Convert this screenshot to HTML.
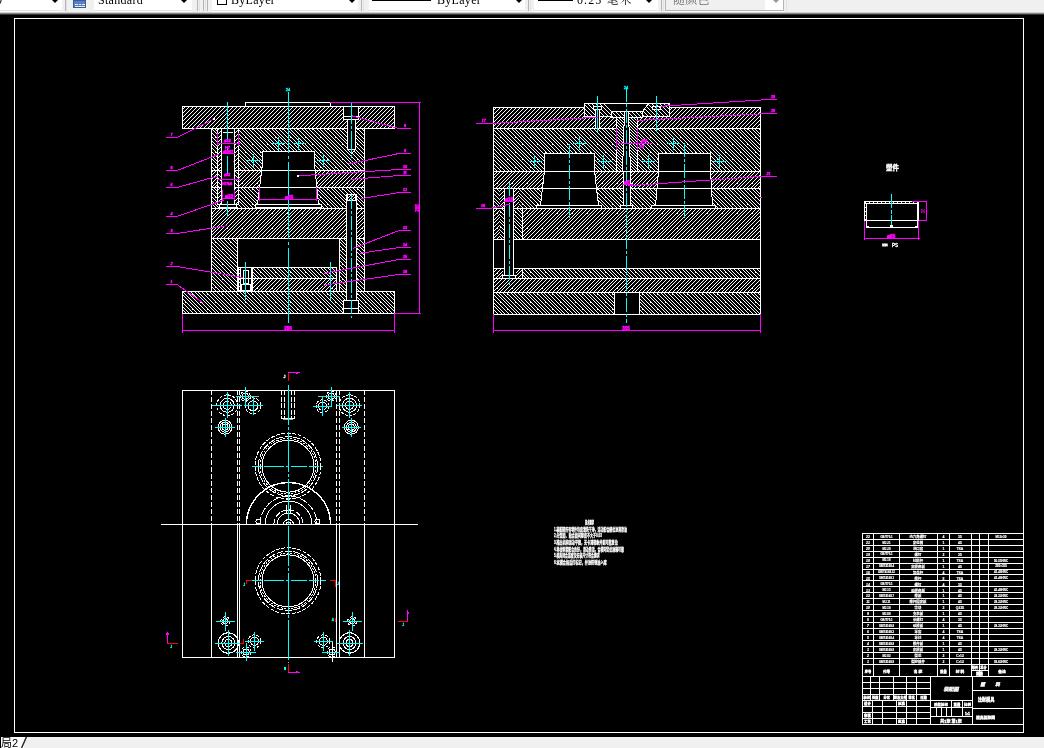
<!DOCTYPE html>
<html lang="zh-CN">
<head>
<meta charset="utf-8">
<title>装配图</title>
<style>
html,body{margin:0;padding:0;background:#000;}
body{width:1044px;height:748px;overflow:hidden;position:relative;font-family:"Liberation Serif","Noto Serif CJK SC",serif;}
#cad{position:absolute;left:0;top:0;width:1044px;height:748px;display:block;will-change:transform;}
#cad text{font-family:"Liberation Sans","Noto Sans CJK SC",sans-serif;}
#tb{position:absolute;left:0;top:0;width:1044px;height:15px;background:linear-gradient(#f0f0f0 0,#f0f0f0 12px,#cfcfcf 12px,#cfcfcf 13px,#858585 13px,#858585 14px,#333 14px,#333 15px);overflow:hidden;will-change:transform;}
.cb{position:absolute;top:0;height:11px;background:#fff;border-bottom:1px solid #dfe3e8;box-sizing:border-box;overflow:hidden;box-shadow:0 1px 0 #fdfdfd;}
.cb.dis{background:#f0f0f0;border:1px solid #b5b5b5;border-top:0;}
.cb span{position:absolute;top:-6px;font-size:12px;line-height:12px;white-space:nowrap;color:#000;letter-spacing:0.3px;}
.cb.dis span{color:#6d6d6d;}
.ar{position:absolute;top:-1px;width:0;height:0;border-left:4px solid transparent;border-right:4px solid transparent;border-top:4px solid #000;}
.ar.g{border-top-color:#9a9a9a;}
.gr{position:absolute;top:0;width:1px;height:11px;background:#b4b4b4;}
.gr.l{background:#e2e2e2;}
.sw{position:absolute;top:0;height:1px;background:#000;}
.chk{position:absolute;top:-5px;width:8px;height:8px;border:1px solid #000;}
#ico{position:absolute;left:73px;top:0;width:13px;height:8px;background:#5b7fc0;border:1px solid #3c5a99;box-sizing:border-box;}
#ico i{position:absolute;background:#dfe8f7;height:1px;}
#sb{position:absolute;left:0;top:737px;width:1044px;height:11px;background:#f0f0f0;overflow:hidden;will-change:transform;}
#sb .tab{position:absolute;left:0;top:0;width:24px;height:11px;background:#fff;}
#sb span{position:absolute;left:0;top:0;font-family:"Liberation Sans","Noto Sans CJK SC",sans-serif;font-size:11px;line-height:12px;color:#000;white-space:nowrap;}
</style>
</head>
<body>
<svg id="cad" width="1044" height="748" viewBox="0 0 1044 748" shape-rendering="crispEdges" fill="none" stroke-width="1">
<defs>
<pattern id="h1" patternUnits="userSpaceOnUse" width="4" height="4"><rect width="4" height="4" fill="#000"/><path d="M3 0.5h1M2 1.5h1M1 2.5h1M0 3.5h1" stroke="#fff" stroke-width="1"/></pattern>
<pattern id="h2" patternUnits="userSpaceOnUse" width="4" height="4"><rect width="4" height="4" fill="#000"/><path d="M0 0.5h1M1 1.5h1M2 2.5h1M3 3.5h1" stroke="#fff" stroke-width="1"/></pattern>
<pattern id="h3" patternUnits="userSpaceOnUse" width="3" height="3"><rect width="3" height="3" fill="#000"/><path d="M2 0.5h1M1 1.5h1M0 2.5h1" stroke="#fff" stroke-width="1"/></pattern>
<pattern id="h4" patternUnits="userSpaceOnUse" width="3" height="3"><rect width="3" height="3" fill="#000"/><path d="M0 0.5h1M1 1.5h1M2 2.5h1" stroke="#fff" stroke-width="1"/></pattern>
<pattern id="h5" patternUnits="userSpaceOnUse" width="15" height="15"><rect width="15" height="15" fill="#000"/><path d="M0 0.5h1M4 0.5h1M8 0.5h1M11 0.5h1M14 1.5h1M3 1.5h1M7 1.5h1M10 1.5h1M13 2.5h1M2 2.5h1M6 2.5h1M9 2.5h1M12 3.5h1M1 3.5h1M5 3.5h1M8 3.5h1M11 4.5h1M0 4.5h1M4 4.5h1M7 4.5h1M10 5.5h1M14 5.5h1M3 5.5h1M6 5.5h1M9 6.5h1M13 6.5h1M2 6.5h1M5 6.5h1M8 7.5h1M12 7.5h1M1 7.5h1M4 7.5h1M7 8.5h1M11 8.5h1M0 8.5h1M3 8.5h1M6 9.5h1M10 9.5h1M14 9.5h1M2 9.5h1M5 10.5h1M9 10.5h1M13 10.5h1M1 10.5h1M4 11.5h1M8 11.5h1M12 11.5h1M0 11.5h1M3 12.5h1M7 12.5h1M11 12.5h1M14 12.5h1M2 13.5h1M6 13.5h1M10 13.5h1M13 13.5h1M1 14.5h1M5 14.5h1M9 14.5h1M12 14.5h1M2 3.5h1M9 10.5h1" stroke="#fff" stroke-width="1"/></pattern>
<pattern id="h6" patternUnits="userSpaceOnUse" width="15" height="15"><rect width="15" height="15" fill="#000"/><path d="M0 0.5h1M4 0.5h1M8 0.5h1M11 0.5h1M1 1.5h1M5 1.5h1M9 1.5h1M12 1.5h1M2 2.5h1M6 2.5h1M10 2.5h1M13 2.5h1M3 3.5h1M7 3.5h1M11 3.5h1M14 3.5h1M4 4.5h1M8 4.5h1M12 4.5h1M0 4.5h1M5 5.5h1M9 5.5h1M13 5.5h1M1 5.5h1M6 6.5h1M10 6.5h1M14 6.5h1M2 6.5h1M7 7.5h1M11 7.5h1M0 7.5h1M3 7.5h1M8 8.5h1M12 8.5h1M1 8.5h1M4 8.5h1M9 9.5h1M13 9.5h1M2 9.5h1M5 9.5h1M10 10.5h1M14 10.5h1M3 10.5h1M6 10.5h1M11 11.5h1M0 11.5h1M4 11.5h1M7 11.5h1M12 12.5h1M1 12.5h1M5 12.5h1M8 12.5h1M13 13.5h1M2 13.5h1M6 13.5h1M9 13.5h1M14 14.5h1M3 14.5h1M7 14.5h1M10 14.5h1M5 2.5h1M12 9.5h1" stroke="#fff" stroke-width="1"/></pattern>
<clipPath id="planclip"><rect x="182" y="390" width="213" height="267"/></clipPath>
</defs>
<rect x="0" y="0" width="1044" height="748" fill="#000" stroke="none"/>
<rect x="14.5" y="18.5" width="1009" height="714" fill="none" stroke="#fff"/>
<rect x="245.5" y="102.5" width="85" height="4" fill="#000" stroke="#fff"/>
<rect x="182.5" y="106.5" width="212" height="22" fill="url(#h1)" stroke="#fff"/>
<rect x="211.5" y="128.5" width="153" height="42" fill="url(#h6)" stroke="#fff"/>
<rect x="211.5" y="170.5" width="153" height="17" fill="url(#h5)" stroke="#fff"/>
<rect x="211.5" y="187.5" width="153" height="21" fill="url(#h6)" stroke="#fff"/>
<rect x="211.5" y="208.5" width="153" height="30" fill="url(#h5)" stroke="#fff"/>
<rect x="211.5" y="238.5" width="26" height="53" fill="url(#h6)" stroke="#fff"/>
<rect x="339.5" y="238.5" width="25" height="53" fill="url(#h6)" stroke="#fff"/>
<rect x="238.5" y="267.5" width="98" height="11" fill="url(#h6)" stroke="#fff"/>
<rect x="238.5" y="278.5" width="98" height="13" fill="url(#h5)" stroke="#fff"/>
<rect x="182.5" y="291.5" width="212" height="22" fill="url(#h6)" stroke="#fff"/>
<polygon points="262.5,151.5 314.5,151.5 314.5,164 318.5,204.5 257.5,204.5 262.5,164" fill="#000" stroke="#fff"/>
<path d="M259 170.5H318" stroke="#fff"/>
<path d="M258 187.5H319" stroke="#fff"/>
<rect x="255.5" y="204.5" width="66" height="3" fill="#000" stroke="#fff"/>
<rect x="217.5" y="128.5" width="21" height="42" fill="url(#h1)" stroke="#fff"/>
<rect x="217.5" y="170.5" width="21" height="17" fill="url(#h2)" stroke="#fff"/>
<rect x="217.5" y="187.5" width="21" height="17" fill="url(#h1)" stroke="#fff"/>
<rect x="221.5" y="128.5" width="13" height="76" fill="#000" stroke="#fff"/>
<path d="M223 132.5H233" stroke="#fff"/>
<rect x="219.5" y="204.5" width="17" height="3" fill="#000" stroke="#fff"/>
<rect x="343.5" y="106.5" width="15" height="13" fill="#000" stroke="#fff"/>
<path d="M343 116.5H358" stroke="#fff"/>
<rect x="347.5" y="119.5" width="8" height="30" fill="#000" stroke="#fff"/>
<polygon points="347.5,149.5 355.5,149.5 351.5,153.5" fill="#000" stroke="#fff"/>
<rect x="346.5" y="194.5" width="10" height="106" fill="#000" stroke="#fff"/>
<rect x="347.5" y="194.5" width="8" height="6" fill="url(#h3)" stroke="#fff"/>
<path d="M346 200.5H356" stroke="#fff"/>
<rect x="343.5" y="300.5" width="15" height="13" fill="#000" stroke="#fff"/>
<path d="M343 308.5H358" stroke="#fff"/>
<rect x="240.5" y="267.5" width="11" height="24" fill="#000" stroke="#fff"/>
<rect x="243.5" y="270.5" width="5" height="13" fill="#000" stroke="#fff"/>
<rect x="241.5" y="284.5" width="9" height="6" fill="#000" stroke="#fff"/>
<path d="M240 278.5H251" stroke="#fff"/>
<path d="M252.5 267V291" stroke="#fff"/>
<path d="M288.5 92V323" stroke="#00ffff" stroke-dasharray="77 3 3 3" stroke-dashoffset="16"/>
<path d="M227.5 102V140" stroke="#00ffff"/>
<path d="M227.5 146V150" stroke="#00ffff"/>
<path d="M227.5 156V176" stroke="#00ffff"/>
<path d="M227.5 201V217" stroke="#00ffff"/>
<path d="M351.5 102V161" stroke="#00ffff" stroke-dasharray="22 2 3 2"/>
<path d="M351.5 195V318" stroke="#00ffff" stroke-dasharray="14 2 3 2"/>
<path d="M245.5 262V300" stroke="#00ffff"/>
<path d="M330.5 262V300" stroke="#00ffff"/>
<text transform="translate(288 91) scale(0.4)" font-size="10" fill="#00ffff" stroke="#00ffff" stroke-width="0.87" text-anchor="middle">24</text>
<path d="M272 143.5H285" stroke="#00ffff"/>
<path d="M278.5 137V150" stroke="#00ffff"/>
<path d="M292.7 143.5H305.7" stroke="#00ffff"/>
<path d="M298.5 137V150" stroke="#00ffff"/>
<path d="M247.3 160.5H260.3" stroke="#00ffff"/>
<path d="M253.5 154.3V167.3" stroke="#00ffff"/>
<path d="M317 160.5H330" stroke="#00ffff"/>
<path d="M323.5 154.3V167.3" stroke="#00ffff"/>
<path d="M330 102.5H421" stroke="#ff00ff"/>
<path d="M419.5 102V314" stroke="#ff00ff"/>
<path d="M394 313.5H421" stroke="#ff00ff"/>
<text transform="translate(419 208) rotate(-90) scale(0.45)" font-size="10" fill="#ff00ff" stroke="#ff00ff" stroke-width="1" text-anchor="middle" font-weight="bold">205</text>
<path d="M182 330.5H395" stroke="#ff00ff"/>
<path d="M182.5 314V333" stroke="#ff00ff"/>
<path d="M394.5 314V333" stroke="#ff00ff"/>
<text transform="translate(288 329.5) scale(0.45)" font-size="10" fill="#ff00ff" stroke="#ff00ff" stroke-width="1.22" text-anchor="middle" font-weight="bold">250</text>
<path d="M259 199.5H317" stroke="#ff00ff"/>
<path d="M259.5 187V201" stroke="#ff00ff"/>
<path d="M316.5 187V201" stroke="#ff00ff"/>
<text transform="translate(289 198.5) scale(0.5)" font-size="10" fill="#ff00ff" stroke="#ff00ff" stroke-width="1.1" text-anchor="middle" font-weight="bold">⌀65</text>
<path d="M217 143.5H240" stroke="#ff00ff"/>
<path d="M217.5 133V146" stroke="#ff00ff"/>
<path d="M238.5 133V146" stroke="#ff00ff"/>
<text transform="translate(227.5 142) scale(0.4)" font-size="10" fill="#ff00ff" stroke="#ff00ff" stroke-width="1.38" text-anchor="middle" font-weight="bold">⌀32</text>
<text transform="translate(227.5 148.5) scale(0.4)" font-size="10" fill="#ff00ff" stroke="#ff00ff" stroke-width="1.38" text-anchor="middle" font-weight="bold">H7</text>
<path d="M222 153.5H235" stroke="#ff00ff"/>
<text transform="translate(228 152.5) scale(0.36)" font-size="10" fill="#ff00ff" stroke="#ff00ff" stroke-width="1.53" text-anchor="middle" font-weight="bold">⌀20H7</text>
<path d="M217 179.5H240" stroke="#ff00ff"/>
<text transform="translate(227 176) scale(0.4)" font-size="10" fill="#ff00ff" stroke="#ff00ff" stroke-width="1.38" text-anchor="middle" font-weight="bold">⌀32</text>
<text transform="translate(227 185) scale(0.4)" font-size="10" fill="#ff00ff" stroke="#ff00ff" stroke-width="1.38" text-anchor="middle" font-weight="bold">H7/k6</text>
<path d="M222 198.5H235" stroke="#ff00ff"/>
<path d="M222.5 190V200" stroke="#ff00ff"/>
<path d="M234.5 190V200" stroke="#ff00ff"/>
<text transform="translate(229 197.5) scale(0.5)" font-size="10" fill="#ff00ff" stroke="#ff00ff" stroke-width="1.1" text-anchor="middle" font-weight="bold">⌀20</text>
<path d="M221 161h1M233 161h1" stroke="#ff00ff"/>
<path d="M166 137.5H177" stroke="#ff00ff"/>
<path d="M177 137.5L214 119.2" stroke="#ff00ff"/>
<text transform="translate(171.5 136) scale(0.36)" font-size="10" fill="#ff00ff" stroke="#ff00ff" stroke-width="1.53" text-anchor="middle" font-style="italic">7</text>
<path d="M166 170.5H177" stroke="#ff00ff"/>
<path d="M177 170.5L219.2 154.2" stroke="#ff00ff"/>
<text transform="translate(171.5 168.8) scale(0.36)" font-size="10" fill="#ff00ff" stroke="#ff00ff" stroke-width="1.53" text-anchor="middle" font-style="italic">6</text>
<path d="M166 187.5H177" stroke="#ff00ff"/>
<path d="M177 187.5L217.5 176.2" stroke="#ff00ff"/>
<text transform="translate(171.5 185.7) scale(0.36)" font-size="10" fill="#ff00ff" stroke="#ff00ff" stroke-width="1.53" text-anchor="middle" font-style="italic">5</text>
<path d="M166 216.5H177" stroke="#ff00ff"/>
<path d="M177 216.5L224 200" stroke="#ff00ff"/>
<text transform="translate(171.5 214.5) scale(0.36)" font-size="10" fill="#ff00ff" stroke="#ff00ff" stroke-width="1.53" text-anchor="middle" font-style="italic">4</text>
<path d="M166 233.5H177" stroke="#ff00ff"/>
<path d="M177 233.5L226.7 225.8" stroke="#ff00ff"/>
<text transform="translate(171.5 231.5) scale(0.36)" font-size="10" fill="#ff00ff" stroke="#ff00ff" stroke-width="1.53" text-anchor="middle" font-style="italic">3</text>
<path d="M166 266.5H177" stroke="#ff00ff"/>
<path d="M177 266.5L243.3 277.5" stroke="#ff00ff"/>
<text transform="translate(171.5 264.8) scale(0.36)" font-size="10" fill="#ff00ff" stroke="#ff00ff" stroke-width="1.53" text-anchor="middle" font-style="italic">2</text>
<path d="M166 284.5H177" stroke="#ff00ff"/>
<path d="M177 284.5L203.3 303" stroke="#ff00ff"/>
<text transform="translate(171.5 282.7) scale(0.36)" font-size="10" fill="#ff00ff" stroke="#ff00ff" stroke-width="1.53" text-anchor="middle" font-style="italic">1</text>
<path d="M399 128.5H411" stroke="#ff00ff"/>
<path d="M399 128.5L351.7 115.8" stroke="#ff00ff"/>
<text transform="translate(405 126.8) scale(0.36)" font-size="10" fill="#ff00ff" stroke="#ff00ff" stroke-width="1.53" text-anchor="middle" font-style="italic">8</text>
<path d="M399 153.5H411" stroke="#ff00ff"/>
<path d="M399 153.5L347.5 164.2" stroke="#ff00ff"/>
<text transform="translate(405 151.5) scale(0.36)" font-size="10" fill="#ff00ff" stroke="#ff00ff" stroke-width="1.53" text-anchor="middle" font-style="italic">9</text>
<path d="M399 169.5H411" stroke="#ff00ff"/>
<path d="M399 169.5L298 175.8" stroke="#ff00ff"/>
<text transform="translate(405 167.7) scale(0.36)" font-size="10" fill="#ff00ff" stroke="#ff00ff" stroke-width="1.53" text-anchor="middle" font-style="italic">10</text>
<path d="M399 175.5H411" stroke="#ff00ff"/>
<path d="M399 175.5L350 179.5" stroke="#ff00ff"/>
<text transform="translate(405 173.8) scale(0.36)" font-size="10" fill="#ff00ff" stroke="#ff00ff" stroke-width="1.53" text-anchor="middle" font-style="italic">11</text>
<path d="M399 192.5H411" stroke="#ff00ff"/>
<path d="M399 192.5L360.8 198.7" stroke="#ff00ff"/>
<text transform="translate(405 190.5) scale(0.36)" font-size="10" fill="#ff00ff" stroke="#ff00ff" stroke-width="1.53" text-anchor="middle" font-style="italic">12</text>
<path d="M399 230.5H411" stroke="#ff00ff"/>
<path d="M399 230.5L353.3 248.3" stroke="#ff00ff"/>
<text transform="translate(405 228.8) scale(0.36)" font-size="10" fill="#ff00ff" stroke="#ff00ff" stroke-width="1.53" text-anchor="middle" font-style="italic">13</text>
<path d="M399 247.5H411" stroke="#ff00ff"/>
<path d="M399 247.5L360 253.3" stroke="#ff00ff"/>
<text transform="translate(405 245.7) scale(0.36)" font-size="10" fill="#ff00ff" stroke="#ff00ff" stroke-width="1.53" text-anchor="middle" font-style="italic">14</text>
<path d="M399 259.5H411" stroke="#ff00ff"/>
<path d="M399 259.5L324.2 273.3" stroke="#ff00ff"/>
<text transform="translate(405 257.7) scale(0.36)" font-size="10" fill="#ff00ff" stroke="#ff00ff" stroke-width="1.53" text-anchor="middle" font-style="italic">15</text>
<path d="M399 274.5H411" stroke="#ff00ff"/>
<path d="M399 274.5L322.5 285.3" stroke="#ff00ff"/>
<text transform="translate(405 272.7) scale(0.36)" font-size="10" fill="#ff00ff" stroke="#ff00ff" stroke-width="1.53" text-anchor="middle" font-style="italic">16</text>
<rect x="297" y="175" width="2" height="2" fill="#fff"/>
<rect x="213" y="118" width="2" height="2" fill="#fff"/>
<rect x="493.5" y="107.5" width="267" height="21" fill="url(#h1)" stroke="#fff"/>
<rect x="493.5" y="128.5" width="267" height="43" fill="url(#h6)" stroke="#fff"/>
<rect x="493.5" y="171.5" width="267" height="17" fill="url(#h5)" stroke="#fff"/>
<rect x="493.5" y="188.5" width="267" height="20" fill="url(#h6)" stroke="#fff"/>
<rect x="493.5" y="208.5" width="267" height="31" fill="url(#h5)" stroke="#fff"/>
<rect x="493.5" y="239.5" width="267" height="29" fill="#000" stroke="#fff"/>
<rect x="493.5" y="268.5" width="267" height="10" fill="url(#h6)" stroke="#fff"/>
<rect x="493.5" y="278.5" width="267" height="14" fill="url(#h5)" stroke="#fff"/>
<rect x="493.5" y="292.5" width="267" height="22" fill="url(#h6)" stroke="#fff"/>
<rect x="614.5" y="292.5" width="25" height="22" fill="#000" stroke="#fff"/>
<rect x="493.5" y="188.5" width="6" height="20" fill="url(#h6)" stroke="none"/>
<rect x="499.5" y="188.5" width="5" height="20" fill="url(#h5)" stroke="none"/>
<rect x="513.5" y="188.5" width="5" height="20" fill="url(#h5)" stroke="none"/>
<rect x="493.5" y="208.5" width="6" height="31" fill="url(#h5)" stroke="none"/>
<rect x="499.5" y="208.5" width="5" height="31" fill="url(#h6)" stroke="none"/>
<rect x="513.5" y="208.5" width="9" height="31" fill="url(#h6)" stroke="none"/>
<path d="M522.5 208V239" stroke="#fff"/>
<path d="M493.5 188V239" stroke="#fff"/>
<path d="M493 188.5H523" stroke="#fff"/>
<path d="M493 208.5H523" stroke="#fff"/>
<path d="M493 239.5H523" stroke="#fff"/>
<rect x="493.5" y="268.5" width="29" height="10" fill="url(#h5)" stroke="#fff"/>
<rect x="502.5" y="268.5" width="13" height="10" fill="#000" stroke="none"/>
<rect x="504.5" y="188.5" width="9" height="87" fill="#000" stroke="#fff"/>
<rect x="502.5" y="275.5" width="13" height="3" fill="#000" stroke="#fff"/>
<polygon points="584.5,103.5 603.5,103.5 611.5,111.5 611.5,116.5 584.5,116.5" fill="url(#h2)" stroke="#fff"/>
<polygon points="648.5,103.5 669.5,103.5 669.5,116.5 642.5,116.5 642.5,111.5" fill="url(#h2)" stroke="#fff"/>
<polygon points="603.5,103.5 648.5,103.5 642.5,111.5 611.5,111.5" fill="#000" stroke="#fff"/>
<rect x="593.5" y="106.5" width="8" height="3" fill="#000" stroke="#fff"/>
<rect x="595.5" y="109.5" width="4" height="19" fill="#000" stroke="#fff"/>
<rect x="652.5" y="106.5" width="8" height="3" fill="url(#h2)" stroke="#fff"/>
<rect x="611.5" y="111.5" width="31" height="6" fill="url(#h2)" stroke="#fff"/>
<rect x="616.5" y="117.5" width="21" height="54" fill="url(#h4)" stroke="#fff"/>
<polygon points="624.5,111.5 628.5,111.5 630.5,171.5 622.5,171.5" fill="#000" stroke="#fff"/>
<rect x="623.5" y="171.5" width="7" height="34" fill="#000" stroke="#fff"/>
<rect x="620.5" y="205.5" width="12" height="3" fill="#000" stroke="#fff"/>
<polygon points="544.5,153.5 594.5,153.5 594.5,171 598.5,205.5 540.5,205.5 544.5,171" fill="#000" stroke="#fff"/>
<path d="M544 171.5H595" stroke="#fff"/>
<path d="M542 188.5H597" stroke="#fff"/>
<rect x="536.5" y="205.5" width="65" height="3" fill="#000" stroke="#fff"/>
<polygon points="658.5,153.5 710.5,153.5 710.5,171 712.5,205.5 655.5,205.5 658.5,171" fill="#000" stroke="#fff"/>
<path d="M658 171.5H711" stroke="#fff"/>
<path d="M656 188.5H712" stroke="#fff"/>
<rect x="651.5" y="205.5" width="64" height="3" fill="#000" stroke="#fff"/>
<path d="M626.5 88V323" stroke="#00ffff" stroke-dasharray="14 2 3 2"/>
<path d="M569.5 144V218" stroke="#00ffff" stroke-dasharray="14 2 3 2"/>
<path d="M684.5 143V218" stroke="#00ffff" stroke-dasharray="14 2 3 2"/>
<path d="M597.5 96V132" stroke="#00ffff"/>
<path d="M656.5 96V132" stroke="#00ffff"/>
<path d="M509.5 182V286" stroke="#00ffff" stroke-dasharray="14 2 3 2"/>
<text transform="translate(626 89) scale(0.4)" font-size="10" fill="#00ffff" stroke="#00ffff" stroke-width="0.87" text-anchor="middle">24</text>
<path d="M573.2 143.5H586.2" stroke="#00ffff"/>
<path d="M579.5 137.3V150.3" stroke="#00ffff"/>
<path d="M528.5 161.5H541.5" stroke="#00ffff"/>
<path d="M534.5 155.3V168.3" stroke="#00ffff"/>
<path d="M597.8 161.5H610.8" stroke="#00ffff"/>
<path d="M603.5 155.3V168.3" stroke="#00ffff"/>
<path d="M667.3 143.5H680.3" stroke="#00ffff"/>
<path d="M673.5 137.3V150.3" stroke="#00ffff"/>
<path d="M642.3 161.5H655.3" stroke="#00ffff"/>
<path d="M648.5 155.3V168.3" stroke="#00ffff"/>
<path d="M713.2 161.5H726.2" stroke="#00ffff"/>
<path d="M719.5 155.3V168.3" stroke="#00ffff"/>
<path d="M493 330.5H761" stroke="#ff00ff"/>
<path d="M493.5 314V333" stroke="#ff00ff"/>
<path d="M760.5 314V333" stroke="#ff00ff"/>
<text transform="translate(626 329.5) scale(0.45)" font-size="10" fill="#ff00ff" stroke="#ff00ff" stroke-width="1.22" text-anchor="middle" font-weight="bold">315</text>
<path d="M616 143.5H652" stroke="#ff00ff"/>
<path d="M616.5 128V150" stroke="#ff00ff"/>
<path d="M637.5 128V150" stroke="#ff00ff"/>
<text transform="translate(644 141.5) scale(0.4)" font-size="10" fill="#ff00ff" stroke="#ff00ff" stroke-width="1.38" text-anchor="middle" font-weight="bold">⌀20</text>
<text transform="translate(642 147.5) scale(0.4)" font-size="10" fill="#ff00ff" stroke="#ff00ff" stroke-width="1.38" text-anchor="middle" font-weight="bold">H7</text>
<text transform="translate(627 183.5) scale(0.5)" font-size="10" fill="#ff00ff" stroke="#ff00ff" stroke-width="1.1" text-anchor="middle" font-weight="bold">⌀8</text>
<path d="M622 184.5H633" stroke="#ff00ff"/>
<text transform="translate(509 201) scale(0.45)" font-size="10" fill="#ff00ff" stroke="#ff00ff" stroke-width="1.22" text-anchor="middle" font-weight="bold">⌀16</text>
<path d="M504 201.5H515" stroke="#ff00ff"/>
<path d="M476 123.5H491.7" stroke="#ff00ff"/>
<path d="M491.7 123.5L597.5 117.2" stroke="#ff00ff"/>
<text transform="translate(483.85 121.8) scale(0.36)" font-size="10" fill="#ff00ff" stroke="#ff00ff" stroke-width="1.53" text-anchor="middle" font-style="italic">17</text>
<path d="M476 208.5H490" stroke="#ff00ff"/>
<path d="M490 208.5L510 204.2" stroke="#ff00ff"/>
<text transform="translate(483 207.3) scale(0.36)" font-size="10" fill="#ff00ff" stroke="#ff00ff" stroke-width="1.53" text-anchor="middle" font-style="italic">18</text>
<path d="M769 99.5H777" stroke="#ff00ff"/>
<path d="M769 99.5L660.8 106.3" stroke="#ff00ff"/>
<text transform="translate(773 97.7) scale(0.36)" font-size="10" fill="#ff00ff" stroke="#ff00ff" stroke-width="1.53" text-anchor="middle" font-style="italic">19</text>
<path d="M769 113.5H777" stroke="#ff00ff"/>
<path d="M769 113.5L635.8 120.5" stroke="#ff00ff"/>
<text transform="translate(773 111.8) scale(0.36)" font-size="10" fill="#ff00ff" stroke="#ff00ff" stroke-width="1.53" text-anchor="middle" font-style="italic">20</text>
<path d="M760 176.5H777" stroke="#ff00ff"/>
<path d="M760 176.5L628.3 185.8" stroke="#ff00ff"/>
<text transform="translate(768.5 174.7) scale(0.36)" font-size="10" fill="#ff00ff" stroke="#ff00ff" stroke-width="1.53" text-anchor="middle" font-style="italic">21</text>
<rect x="760" y="197" width="2" height="1" fill="#ff00ff"/>
<text transform="translate(892.5 170.3) scale(0.64)" font-size="10" fill="#fff" stroke="#fff" stroke-width="0.55" text-anchor="middle" font-weight="bold">塑件</text>
<path d="M864 201.5H920" stroke="#fff"/>
<path d="M865 202.5H918" stroke="#fff" stroke-dasharray="1 3"/>
<path d="M866 203.5H918" stroke="#fff"/>
<path d="M864.5 201V221" stroke="#fff"/>
<path d="M865.5 203V221" stroke="#fff" stroke-dasharray="1 3"/>
<path d="M866.5 203V228" stroke="#fff"/>
<path d="M917.5 203V228" stroke="#fff"/>
<path d="M918.5 201V221" stroke="#fff"/>
<path d="M864 220.5H920" stroke="#fff"/>
<path d="M866 227.5H918" stroke="#fff"/>
<path d="M867 226.5h2M915 226.5h2M890 225.5h3M890 226.5h3" stroke="#fff"/>
<path d="M891.5 194V225" stroke="#00ffff" stroke-dasharray="14 1.5 4 1.5"/>
<path d="M864.5 221V240" stroke="#ff00ff"/>
<path d="M918.5 221V240" stroke="#ff00ff"/>
<path d="M864 238.5H920" stroke="#ff00ff"/>
<text transform="translate(891 237.5) scale(0.5)" font-size="10" fill="#ff00ff" stroke="#ff00ff" stroke-width="1.1" text-anchor="middle" font-weight="bold">⌀65</text>
<path d="M912 201.5H927" stroke="#ff00ff"/>
<path d="M919 220.5H927" stroke="#ff00ff"/>
<path d="M926.5 201V221" stroke="#ff00ff"/>
<text transform="translate(925 211) rotate(-90) scale(0.45)" font-size="10" fill="#ff00ff" text-anchor="middle" font-weight="bold">30</text>
<text transform="translate(887.5 246) scale(0.26)" font-size="10" fill="#fff" stroke="#fff" stroke-width="1.35" text-anchor="end" font-weight="bold">材料</text>
<text transform="translate(892 246.5) scale(0.46)" font-size="10" fill="#fff" stroke="#fff" stroke-width="0.76" text-anchor="start">PS</text>
<rect x="182.5" y="390.5" width="212" height="267" fill="none" stroke="#fff"/>
<path d="M161 524.5H418" stroke="#fff"/>
<path d="M211.5 390V524" stroke="#fff" stroke-dasharray="5 2"/>
<path d="M211.5 524V657" stroke="#fff"/>
<path d="M237.5 390V524" stroke="#fff" stroke-dasharray="5 2"/>
<path d="M237.5 524V657" stroke="#fff"/>
<path d="M239.5 390V524" stroke="#fff" stroke-dasharray="5 2"/>
<path d="M239.5 524V657" stroke="#fff"/>
<path d="M336.5 390V524" stroke="#fff" stroke-dasharray="5 2"/>
<path d="M336.5 524V657" stroke="#fff"/>
<path d="M339.5 390V524" stroke="#fff" stroke-dasharray="5 2"/>
<path d="M339.5 524V657" stroke="#fff"/>
<path d="M364.5 390V524" stroke="#fff" stroke-dasharray="5 2"/>
<path d="M364.5 524V657" stroke="#fff"/>
<path d="M281.5 390V418" stroke="#fff" stroke-dasharray="5 1.5"/>
<path d="M284.5 390V418" stroke="#fff" stroke-dasharray="5 1.5"/>
<path d="M291.5 390V418" stroke="#fff" stroke-dasharray="5 1.5"/>
<path d="M294.5 390V418" stroke="#fff" stroke-dasharray="5 1.5"/>
<path d="M281 418.5H295" stroke="#fff"/>
<path d="M283 419.5H293" stroke="#8fbc8f"/>
<circle cx="288" cy="466.2" r="33" fill="none" stroke="#fff" stroke-dasharray="4 1.5"/>
<circle cx="288" cy="466.2" r="29.6" fill="none" stroke="#fff" stroke-dasharray="7 1.5"/>
<circle cx="288" cy="466.2" r="27.8" fill="none" stroke="#fff" stroke-dasharray="2 1.5"/>
<circle cx="288" cy="466.2" r="26" fill="none" stroke="#fff"/>
<circle cx="288" cy="580.8" r="33" fill="none" stroke="#fff" stroke-dasharray="4 1.5"/>
<circle cx="288" cy="580.8" r="29.6" fill="none" stroke="#fff" stroke-dasharray="7 1.5"/>
<circle cx="288" cy="580.8" r="27.8" fill="none" stroke="#fff" stroke-dasharray="2 1.5"/>
<circle cx="288" cy="580.8" r="26" fill="none" stroke="#fff"/>
<path d="M246.5 524.5A42 42 0 0 1 330.5 524.5" fill="none" stroke="#fff" stroke-width="1.4"/>
<path d="M260 524.5A28.5 28.5 0 0 1 317 524.5" fill="none" stroke="#fff" stroke-dasharray="8 1.5"/>
<path d="M265 524.5A23.5 23.5 0 0 1 312 524.5" fill="none" stroke="#fff"/>
<path d="M273.9 524.5A14.6 14.6 0 0 1 303.1 524.5" fill="none" stroke="#fff" stroke-dasharray="6 1.5"/>
<path d="M277.2 524.5A11.3 11.3 0 0 1 299.8 524.5" fill="none" stroke="#fff"/>
<path d="M283.5 524.5A5 5 0 0 1 293.5 524.5" fill="none" stroke="#fff"/>
<path d="M286 524.5A2.5 2.5 0 0 1 291 524.5" fill="none" stroke="#fff"/>
<circle cx="258.5" cy="521.5" r="2.5" fill="none" stroke="#fff"/>
<circle cx="317.5" cy="521.5" r="2.5" fill="none" stroke="#fff"/>
<path d="M286 498.5h5M286 510.5h5M286.5 505v8M290.5 505v8" stroke="#fff" fill="none"/>
<path d="M288.5 385V663" stroke="#00ffff" stroke-dasharray="40 2 3 2"/>
<path d="M252 466.5H323" stroke="#00ffff" stroke-dasharray="10 2 20 2 3 2 16 2"/>
<path d="M252 580.5H326" stroke="#00ffff" stroke-dasharray="10 2 20 2 3 2 16 2"/>
<circle cx="227.2" cy="405.3" r="10.4" fill="none" stroke="#fff" stroke-dasharray="3 1.5"/>
<circle cx="227.2" cy="405.3" r="7" fill="none" stroke="#fff"/>
<circle cx="227.2" cy="405.3" r="4" fill="none" stroke="#fff"/>
<path d="M212.2 405.5H242.2" stroke="#00ffff"/>
<path d="M227.5 392.3V418.3" stroke="#00ffff"/>
<circle cx="349.5" cy="405.3" r="10.4" fill="none" stroke="#fff" stroke-dasharray="3 1.5"/>
<circle cx="349.5" cy="405.3" r="7" fill="none" stroke="#fff"/>
<circle cx="349.5" cy="405.3" r="4" fill="none" stroke="#fff"/>
<path d="M337 405.5H362" stroke="#00ffff"/>
<path d="M349.5 392.3V418.3" stroke="#00ffff"/>
<circle cx="228.3" cy="643" r="10.2" fill="none" stroke="#fff"/>
<circle cx="228.3" cy="643" r="6.5" fill="none" stroke="#fff"/>
<circle cx="228.3" cy="643" r="3.5" fill="none" stroke="#fff"/>
<path d="M215.3 643.5H241.3" stroke="#00ffff"/>
<path d="M228.5 630V656" stroke="#00ffff"/>
<circle cx="349.5" cy="643" r="10.2" fill="none" stroke="#fff"/>
<circle cx="349.5" cy="643" r="6.5" fill="none" stroke="#fff"/>
<circle cx="349.5" cy="643" r="3.5" fill="none" stroke="#fff"/>
<path d="M336.5 643.5H362.5" stroke="#00ffff"/>
<path d="M349.5 630V656" stroke="#00ffff"/>
<circle cx="225" cy="427.2" r="7" fill="none" stroke="#fff"/>
<circle cx="225" cy="427.2" r="5" fill="none" stroke="#fff"/>
<circle cx="225" cy="427.2" r="3" fill="none" stroke="#fff"/>
<path d="M215 427.5H235" stroke="#00ffff"/>
<path d="M225.5 417.7V436.7" stroke="#00ffff"/>
<circle cx="351.3" cy="427.2" r="7" fill="none" stroke="#fff"/>
<circle cx="351.3" cy="427.2" r="5" fill="none" stroke="#fff"/>
<circle cx="351.3" cy="427.2" r="3" fill="none" stroke="#fff"/>
<path d="M341.8 427.5H360.8" stroke="#00ffff"/>
<path d="M351.5 417.7V436.7" stroke="#00ffff"/>
<circle cx="225.3" cy="621.2" r="4.5" fill="none" stroke="#fff" stroke-dasharray="3 1.5"/>
<circle cx="225.3" cy="621.2" r="2.5" fill="none" stroke="#fff"/>
<path d="M215.8 621.5H234.8" stroke="#00ffff"/>
<path d="M225.5 611.7V630.7" stroke="#00ffff"/>
<circle cx="352.2" cy="621.2" r="4.5" fill="none" stroke="#fff" stroke-dasharray="3 1.5"/>
<circle cx="352.2" cy="621.2" r="2.5" fill="none" stroke="#fff"/>
<path d="M342.7 621.5H361.7" stroke="#00ffff"/>
<path d="M352.5 611.7V630.7" stroke="#00ffff"/>
<circle cx="253" cy="405.8" r="7.9" fill="none" stroke="#fff" stroke-dasharray="3 1.5"/>
<circle cx="253" cy="405.8" r="5" fill="none" stroke="#fff"/>
<path d="M243.5 405.5H262.5" stroke="#00ffff"/>
<path d="M253.5 396.3V415.3" stroke="#00ffff"/>
<circle cx="322.5" cy="406.2" r="6.5" fill="none" stroke="#fff" stroke-dasharray="3 1.5"/>
<circle cx="322.5" cy="406.2" r="4" fill="none" stroke="#fff"/>
<path d="M313 406.5H332" stroke="#00ffff"/>
<path d="M322.5 396.7V415.7" stroke="#00ffff"/>
<circle cx="254.5" cy="641.3" r="6.5" fill="none" stroke="#fff" stroke-dasharray="3 1.5"/>
<circle cx="254.5" cy="641.3" r="4" fill="none" stroke="#fff"/>
<path d="M245 641.5H264" stroke="#00ffff"/>
<path d="M254.5 631.8V650.8" stroke="#00ffff"/>
<circle cx="323.3" cy="641.3" r="6.5" fill="none" stroke="#fff" stroke-dasharray="3 1.5"/>
<circle cx="323.3" cy="641.3" r="4" fill="none" stroke="#fff"/>
<path d="M313.8 641.5H332.8" stroke="#00ffff"/>
<path d="M323.5 631.8V650.8" stroke="#00ffff"/>
<g clip-path="url(#planclip)">
<circle cx="245.3" cy="396.2" r="5" fill="none" stroke="#fff" stroke-dasharray="3 1.5"/>
<circle cx="245.3" cy="396.2" r="3" fill="none" stroke="#fff"/>
<circle cx="331.3" cy="396.2" r="5" fill="none" stroke="#fff" stroke-dasharray="3 1.5"/>
<circle cx="331.3" cy="396.2" r="3" fill="none" stroke="#fff"/>
<circle cx="246.2" cy="652" r="5" fill="none" stroke="#fff" stroke-dasharray="3 1.5"/>
<circle cx="246.2" cy="652" r="3" fill="none" stroke="#fff"/>
<circle cx="332.2" cy="652" r="5" fill="none" stroke="#fff" stroke-dasharray="3 1.5"/>
<circle cx="332.2" cy="652" r="3" fill="none" stroke="#fff"/>
</g>
<path d="M236 396.5H258" stroke="#00ffff"/>
<path d="M245.5 387V406" stroke="#00ffff"/>
<path d="M318 396.5H340" stroke="#00ffff"/>
<path d="M331.5 387V406" stroke="#00ffff"/>
<path d="M236 652.5H256" stroke="#00ffff"/>
<path d="M246.5 643V661" stroke="#00ffff"/>
<path d="M322 652.5H340" stroke="#00ffff"/>
<path d="M332.5 642V662" stroke="#fff"/>
<path d="M251 396.5H259" stroke="#8fbc8f"/>
<path d="M318 396.5H325" stroke="#8fbc8f"/>
<path d="M288.5 372V381" stroke="#ff0000"/>
<path d="M288 372.5H300" stroke="#ff00ff"/>
<text transform="translate(284.5 378) scale(0.4)" font-size="10" fill="#fff" stroke="#fff" stroke-width="0.87" text-anchor="middle">J</text>
<rect x="296" y="372" width="2" height="2" fill="#ff00ff"/>
<path d="M288.5 664V673" stroke="#ff0000"/>
<path d="M288 672.5H300" stroke="#ff00ff"/>
<rect x="296" y="671" width="2" height="2" fill="#ff00ff"/>
<rect x="284" y="667" width="2" height="3" fill="#00ffff"/>
<path d="M167.5 632V644" stroke="#ff00ff"/>
<path d="M167 643.5H178" stroke="#ff0000"/>
<rect x="166" y="633" width="3" height="2" fill="#ff00ff"/>
<text transform="translate(171 648) scale(0.35)" font-size="10" fill="#00ffff" stroke="#00ffff" stroke-width="1" text-anchor="middle">J</text>
<path d="M407.5 610V622" stroke="#ff00ff"/>
<path d="M398 621.5H408" stroke="#ff0000"/>
<rect x="407" y="612" width="2" height="2" fill="#ff00ff"/>
<text transform="translate(403 626) scale(0.35)" font-size="10" fill="#00ffff" stroke="#00ffff" stroke-width="1" text-anchor="middle">J</text>
<path d="M246 580.5H252" stroke="#ff0000"/>
<path d="M246.5 580V584" stroke="#ff0000"/>
<text transform="translate(244 585.5) scale(0.35)" font-size="10" fill="#00ffff" stroke="#00ffff" stroke-width="1" text-anchor="middle">J</text>
<path d="M330 580.5H336" stroke="#ff0000"/>
<path d="M335.5 580V587" stroke="#ff0000"/>
<text transform="translate(338 585) scale(0.35)" font-size="10" fill="#00ffff" stroke="#00ffff" stroke-width="1" text-anchor="middle">J</text>
<path d="M240 643.5H244" stroke="#ff0000"/>
<path d="M243.5 639V644" stroke="#ff0000"/>
<path d="M335.5 618V622" stroke="#ff0000"/>
<text transform="translate(333 621) scale(0.35)" font-size="10" fill="#00ffff" stroke="#00ffff" stroke-width="1" text-anchor="middle">A</text>
<text transform="translate(585 524) scale(0.5)" font-size="10" fill="#fff" stroke="#fff" stroke-width="0.7" font-weight="bold" textLength="18" lengthAdjust="spacingAndGlyphs">技术要求</text>
<text transform="translate(554 530.5) scale(0.46)" font-size="10" fill="#fff" stroke="#fff" stroke-width="0.6" font-weight="bold" textLength="158.7" lengthAdjust="spacingAndGlyphs">1.装配前所有零件均应清洗干净，活动配合部位涂润滑油</text>
<text transform="translate(554 537) scale(0.46)" font-size="10" fill="#fff" stroke="#fff" stroke-width="0.6" font-weight="bold" textLength="104.35" lengthAdjust="spacingAndGlyphs">2.分型面、贴合面间隙应不大于0.03</text>
<text transform="translate(554 543.8) scale(0.46)" font-size="10" fill="#fff" stroke="#fff" stroke-width="0.6" font-weight="bold" textLength="138.48" lengthAdjust="spacingAndGlyphs">3.推出机构运动平稳，无卡滞现象并能可靠复位</text>
<text transform="translate(554 550.6) scale(0.46)" font-size="10" fill="#fff" stroke="#fff" stroke-width="0.6" font-weight="bold" textLength="152.17" lengthAdjust="spacingAndGlyphs">4.导柱导套配合良好，滑动灵活，合模时定位准确可靠</text>
<text transform="translate(554 557.1) scale(0.46)" font-size="10" fill="#fff" stroke="#fff" stroke-width="0.6" font-weight="bold" textLength="99.35" lengthAdjust="spacingAndGlyphs">5.模具闭合高度及安装尺寸符合要求</text>
<text transform="translate(554 563.8) scale(0.46)" font-size="10" fill="#fff" stroke="#fff" stroke-width="0.6" font-weight="bold" textLength="114.57" lengthAdjust="spacingAndGlyphs">6.试模合格后打标记，并涂防锈油入库</text>
<path d="M862 533.5H1024" stroke="#fff"/>
<path d="M862 539.5H1024" stroke="#fff"/>
<path d="M862 545.5H1024" stroke="#fff"/>
<path d="M862 551.5H1024" stroke="#fff"/>
<path d="M862 557.5H1024" stroke="#fff"/>
<path d="M862 563.5H1024" stroke="#fff"/>
<path d="M862 569.5H1024" stroke="#fff"/>
<path d="M862 574.5H1024" stroke="#fff"/>
<path d="M862 580.5H1024" stroke="#fff"/>
<path d="M862 586.5H1024" stroke="#fff"/>
<path d="M862 592.5H1024" stroke="#fff"/>
<path d="M862 598.5H1024" stroke="#fff"/>
<path d="M862 604.5H1024" stroke="#fff"/>
<path d="M862 610.5H1024" stroke="#fff"/>
<path d="M862 616.5H1024" stroke="#fff"/>
<path d="M862 622.5H1024" stroke="#fff"/>
<path d="M862 628.5H1024" stroke="#fff"/>
<path d="M862 634.5H1024" stroke="#fff"/>
<path d="M862 640.5H1024" stroke="#fff"/>
<path d="M862 646.5H1024" stroke="#fff"/>
<path d="M862 652.5H1024" stroke="#fff"/>
<path d="M862 658.5H1024" stroke="#fff"/>
<path d="M862 664.5H1024" stroke="#fff"/>
<path d="M862.5 533V676" stroke="#fff"/>
<path d="M873.5 533V676" stroke="#fff"/>
<path d="M899.5 533V676" stroke="#fff"/>
<path d="M937.5 533V676" stroke="#fff"/>
<path d="M949.5 533V676" stroke="#fff"/>
<path d="M971.5 533V676" stroke="#fff"/>
<path d="M979.5 533V676" stroke="#fff"/>
<path d="M988.5 533V676" stroke="#fff"/>
<path d="M1023.5 533V676" stroke="#fff"/>
<path d="M862 676.5H1024" stroke="#fff"/>
<path d="M971 670.5H988" stroke="#fff"/>
<path d="M979.5 664V670" stroke="#fff"/>
<text transform="translate(868 537.9) scale(0.34)" font-size="10" fill="#fff" stroke="#fff" stroke-width="0.44" text-anchor="middle" font-weight="bold" font-style="italic">22</text>
<text transform="translate(886.5 537.6) scale(0.28)" font-size="10" fill="#fff" stroke="#fff" stroke-width="0.54" text-anchor="middle" font-weight="bold">GB/T70.1</text>
<text transform="translate(918 537.9) scale(0.34)" font-size="10" fill="#fff" stroke="#fff" stroke-width="0.44" text-anchor="middle" font-weight="bold">内六角螺钉</text>
<text transform="translate(943.5 537.9) scale(0.34)" font-size="10" fill="#fff" stroke="#fff" stroke-width="0.44" text-anchor="middle" font-weight="bold">4</text>
<text transform="translate(960 537.9) scale(0.34)" font-size="10" fill="#fff" stroke="#fff" stroke-width="0.44" text-anchor="middle" font-weight="bold">35</text>
<text transform="translate(1001 537.7) scale(0.3)" font-size="10" fill="#fff" stroke="#fff" stroke-width="0.5" text-anchor="middle" font-weight="bold">M12×30</text>
<text transform="translate(868 543.86) scale(0.34)" font-size="10" fill="#fff" stroke="#fff" stroke-width="0.44" text-anchor="middle" font-weight="bold" font-style="italic">21</text>
<text transform="translate(886.5 543.56) scale(0.28)" font-size="10" fill="#fff" stroke="#fff" stroke-width="0.54" text-anchor="middle" font-weight="bold">MJ-21</text>
<text transform="translate(918 543.86) scale(0.34)" font-size="10" fill="#fff" stroke="#fff" stroke-width="0.44" text-anchor="middle" font-weight="bold">定位圈</text>
<text transform="translate(943.5 543.86) scale(0.34)" font-size="10" fill="#fff" stroke="#fff" stroke-width="0.44" text-anchor="middle" font-weight="bold">1</text>
<text transform="translate(960 543.86) scale(0.34)" font-size="10" fill="#fff" stroke="#fff" stroke-width="0.44" text-anchor="middle" font-weight="bold">45</text>
<text transform="translate(868 549.81) scale(0.34)" font-size="10" fill="#fff" stroke="#fff" stroke-width="0.44" text-anchor="middle" font-weight="bold" font-style="italic">20</text>
<text transform="translate(886.5 549.51) scale(0.28)" font-size="10" fill="#fff" stroke="#fff" stroke-width="0.54" text-anchor="middle" font-weight="bold">MJ-20</text>
<text transform="translate(918 549.81) scale(0.34)" font-size="10" fill="#fff" stroke="#fff" stroke-width="0.44" text-anchor="middle" font-weight="bold">浇口套</text>
<text transform="translate(943.5 549.81) scale(0.34)" font-size="10" fill="#fff" stroke="#fff" stroke-width="0.44" text-anchor="middle" font-weight="bold">1</text>
<text transform="translate(960 549.81) scale(0.34)" font-size="10" fill="#fff" stroke="#fff" stroke-width="0.44" text-anchor="middle" font-weight="bold">T8A</text>
<text transform="translate(868 555.76) scale(0.34)" font-size="10" fill="#fff" stroke="#fff" stroke-width="0.44" text-anchor="middle" font-weight="bold" font-style="italic">19</text>
<text transform="translate(886.5 555.47) scale(0.28)" font-size="10" fill="#fff" stroke="#fff" stroke-width="0.54" text-anchor="middle" font-weight="bold">GB/T70.1</text>
<text transform="translate(918 555.76) scale(0.34)" font-size="10" fill="#fff" stroke="#fff" stroke-width="0.44" text-anchor="middle" font-weight="bold">螺钉</text>
<text transform="translate(943.5 555.76) scale(0.34)" font-size="10" fill="#fff" stroke="#fff" stroke-width="0.44" text-anchor="middle" font-weight="bold">2</text>
<text transform="translate(960 555.76) scale(0.34)" font-size="10" fill="#fff" stroke="#fff" stroke-width="0.44" text-anchor="middle" font-weight="bold">35</text>
<text transform="translate(868 561.72) scale(0.34)" font-size="10" fill="#fff" stroke="#fff" stroke-width="0.44" text-anchor="middle" font-weight="bold" font-style="italic">18</text>
<text transform="translate(886.5 561.42) scale(0.28)" font-size="10" fill="#fff" stroke="#fff" stroke-width="0.54" text-anchor="middle" font-weight="bold">MJ-18</text>
<text transform="translate(918 561.72) scale(0.34)" font-size="10" fill="#fff" stroke="#fff" stroke-width="0.44" text-anchor="middle" font-weight="bold">拉料杆</text>
<text transform="translate(943.5 561.72) scale(0.34)" font-size="10" fill="#fff" stroke="#fff" stroke-width="0.44" text-anchor="middle" font-weight="bold">1</text>
<text transform="translate(960 561.72) scale(0.34)" font-size="10" fill="#fff" stroke="#fff" stroke-width="0.44" text-anchor="middle" font-weight="bold">T8A</text>
<text transform="translate(1001 561.52) scale(0.3)" font-size="10" fill="#fff" stroke="#fff" stroke-width="0.5" text-anchor="middle" font-weight="bold">50-55HRC</text>
<text transform="translate(868 567.67) scale(0.34)" font-size="10" fill="#fff" stroke="#fff" stroke-width="0.44" text-anchor="middle" font-weight="bold" font-style="italic">17</text>
<text transform="translate(886.5 567.38) scale(0.28)" font-size="10" fill="#fff" stroke="#fff" stroke-width="0.54" text-anchor="middle" font-weight="bold">GB/T4169.4</text>
<text transform="translate(918 567.67) scale(0.34)" font-size="10" fill="#fff" stroke="#fff" stroke-width="0.44" text-anchor="middle" font-weight="bold">定模座板</text>
<text transform="translate(943.5 567.67) scale(0.34)" font-size="10" fill="#fff" stroke="#fff" stroke-width="0.44" text-anchor="middle" font-weight="bold">1</text>
<text transform="translate(960 567.67) scale(0.34)" font-size="10" fill="#fff" stroke="#fff" stroke-width="0.44" text-anchor="middle" font-weight="bold">45</text>
<text transform="translate(1001 567.47) scale(0.3)" font-size="10" fill="#fff" stroke="#fff" stroke-width="0.5" text-anchor="middle" font-weight="bold">250×315</text>
<text transform="translate(868 573.63) scale(0.34)" font-size="10" fill="#fff" stroke="#fff" stroke-width="0.44" text-anchor="middle" font-weight="bold" font-style="italic">16</text>
<text transform="translate(886.5 573.33) scale(0.28)" font-size="10" fill="#fff" stroke="#fff" stroke-width="0.54" text-anchor="middle" font-weight="bold">GB/T4169.13</text>
<text transform="translate(918 573.63) scale(0.34)" font-size="10" fill="#fff" stroke="#fff" stroke-width="0.44" text-anchor="middle" font-weight="bold">复位杆</text>
<text transform="translate(943.5 573.63) scale(0.34)" font-size="10" fill="#fff" stroke="#fff" stroke-width="0.44" text-anchor="middle" font-weight="bold">4</text>
<text transform="translate(960 573.63) scale(0.34)" font-size="10" fill="#fff" stroke="#fff" stroke-width="0.44" text-anchor="middle" font-weight="bold">T8A</text>
<text transform="translate(1001 573.43) scale(0.3)" font-size="10" fill="#fff" stroke="#fff" stroke-width="0.5" text-anchor="middle" font-weight="bold">43-48HRC</text>
<text transform="translate(868 579.58) scale(0.34)" font-size="10" fill="#fff" stroke="#fff" stroke-width="0.44" text-anchor="middle" font-weight="bold" font-style="italic">15</text>
<text transform="translate(886.5 579.28) scale(0.28)" font-size="10" fill="#fff" stroke="#fff" stroke-width="0.54" text-anchor="middle" font-weight="bold">GB/T4169.1</text>
<text transform="translate(918 579.58) scale(0.34)" font-size="10" fill="#fff" stroke="#fff" stroke-width="0.44" text-anchor="middle" font-weight="bold">推杆</text>
<text transform="translate(943.5 579.58) scale(0.34)" font-size="10" fill="#fff" stroke="#fff" stroke-width="0.44" text-anchor="middle" font-weight="bold">8</text>
<text transform="translate(960 579.58) scale(0.34)" font-size="10" fill="#fff" stroke="#fff" stroke-width="0.44" text-anchor="middle" font-weight="bold">T8A</text>
<text transform="translate(1001 579.38) scale(0.3)" font-size="10" fill="#fff" stroke="#fff" stroke-width="0.5" text-anchor="middle" font-weight="bold">43-48HRC</text>
<text transform="translate(868 585.54) scale(0.34)" font-size="10" fill="#fff" stroke="#fff" stroke-width="0.44" text-anchor="middle" font-weight="bold" font-style="italic">14</text>
<text transform="translate(886.5 585.24) scale(0.28)" font-size="10" fill="#fff" stroke="#fff" stroke-width="0.54" text-anchor="middle" font-weight="bold">GB/T70.1</text>
<text transform="translate(918 585.54) scale(0.34)" font-size="10" fill="#fff" stroke="#fff" stroke-width="0.44" text-anchor="middle" font-weight="bold">螺钉</text>
<text transform="translate(943.5 585.54) scale(0.34)" font-size="10" fill="#fff" stroke="#fff" stroke-width="0.44" text-anchor="middle" font-weight="bold">4</text>
<text transform="translate(960 585.54) scale(0.34)" font-size="10" fill="#fff" stroke="#fff" stroke-width="0.44" text-anchor="middle" font-weight="bold">35</text>
<text transform="translate(868 591.5) scale(0.34)" font-size="10" fill="#fff" stroke="#fff" stroke-width="0.44" text-anchor="middle" font-weight="bold" font-style="italic">13</text>
<text transform="translate(886.5 591.2) scale(0.28)" font-size="10" fill="#fff" stroke="#fff" stroke-width="0.54" text-anchor="middle" font-weight="bold">MJ-13</text>
<text transform="translate(918 591.5) scale(0.34)" font-size="10" fill="#fff" stroke="#fff" stroke-width="0.44" text-anchor="middle" font-weight="bold">动模座板</text>
<text transform="translate(943.5 591.5) scale(0.34)" font-size="10" fill="#fff" stroke="#fff" stroke-width="0.44" text-anchor="middle" font-weight="bold">1</text>
<text transform="translate(960 591.5) scale(0.34)" font-size="10" fill="#fff" stroke="#fff" stroke-width="0.44" text-anchor="middle" font-weight="bold">45</text>
<text transform="translate(1001 591.29) scale(0.3)" font-size="10" fill="#fff" stroke="#fff" stroke-width="0.5" text-anchor="middle" font-weight="bold">43-48HRC</text>
<text transform="translate(868 597.45) scale(0.34)" font-size="10" fill="#fff" stroke="#fff" stroke-width="0.44" text-anchor="middle" font-weight="bold" font-style="italic">12</text>
<text transform="translate(886.5 597.15) scale(0.28)" font-size="10" fill="#fff" stroke="#fff" stroke-width="0.54" text-anchor="middle" font-weight="bold">GB/T4169.7</text>
<text transform="translate(918 597.45) scale(0.34)" font-size="10" fill="#fff" stroke="#fff" stroke-width="0.44" text-anchor="middle" font-weight="bold">推板</text>
<text transform="translate(943.5 597.45) scale(0.34)" font-size="10" fill="#fff" stroke="#fff" stroke-width="0.44" text-anchor="middle" font-weight="bold">1</text>
<text transform="translate(960 597.45) scale(0.34)" font-size="10" fill="#fff" stroke="#fff" stroke-width="0.44" text-anchor="middle" font-weight="bold">45</text>
<text transform="translate(1001 597.25) scale(0.3)" font-size="10" fill="#fff" stroke="#fff" stroke-width="0.5" text-anchor="middle" font-weight="bold">28-32HRC</text>
<text transform="translate(868 603.4) scale(0.34)" font-size="10" fill="#fff" stroke="#fff" stroke-width="0.44" text-anchor="middle" font-weight="bold" font-style="italic">11</text>
<text transform="translate(886.5 603.11) scale(0.28)" font-size="10" fill="#fff" stroke="#fff" stroke-width="0.54" text-anchor="middle" font-weight="bold">MJ-11</text>
<text transform="translate(918 603.4) scale(0.34)" font-size="10" fill="#fff" stroke="#fff" stroke-width="0.44" text-anchor="middle" font-weight="bold">推杆固定板</text>
<text transform="translate(943.5 603.4) scale(0.34)" font-size="10" fill="#fff" stroke="#fff" stroke-width="0.44" text-anchor="middle" font-weight="bold">1</text>
<text transform="translate(960 603.4) scale(0.34)" font-size="10" fill="#fff" stroke="#fff" stroke-width="0.44" text-anchor="middle" font-weight="bold">45</text>
<text transform="translate(1001 603.2) scale(0.3)" font-size="10" fill="#fff" stroke="#fff" stroke-width="0.5" text-anchor="middle" font-weight="bold">28-32HRC</text>
<text transform="translate(868 609.36) scale(0.34)" font-size="10" fill="#fff" stroke="#fff" stroke-width="0.44" text-anchor="middle" font-weight="bold" font-style="italic">10</text>
<text transform="translate(886.5 609.06) scale(0.28)" font-size="10" fill="#fff" stroke="#fff" stroke-width="0.54" text-anchor="middle" font-weight="bold">MJ-10</text>
<text transform="translate(918 609.36) scale(0.34)" font-size="10" fill="#fff" stroke="#fff" stroke-width="0.44" text-anchor="middle" font-weight="bold">垫块</text>
<text transform="translate(943.5 609.36) scale(0.34)" font-size="10" fill="#fff" stroke="#fff" stroke-width="0.44" text-anchor="middle" font-weight="bold">2</text>
<text transform="translate(960 609.36) scale(0.34)" font-size="10" fill="#fff" stroke="#fff" stroke-width="0.44" text-anchor="middle" font-weight="bold">Q235</text>
<text transform="translate(1001 609.16) scale(0.3)" font-size="10" fill="#fff" stroke="#fff" stroke-width="0.5" text-anchor="middle" font-weight="bold">28-32HRC</text>
<text transform="translate(868 615.31) scale(0.34)" font-size="10" fill="#fff" stroke="#fff" stroke-width="0.44" text-anchor="middle" font-weight="bold" font-style="italic">9</text>
<text transform="translate(886.5 615.01) scale(0.28)" font-size="10" fill="#fff" stroke="#fff" stroke-width="0.54" text-anchor="middle" font-weight="bold">MJ-09</text>
<text transform="translate(918 615.31) scale(0.34)" font-size="10" fill="#fff" stroke="#fff" stroke-width="0.44" text-anchor="middle" font-weight="bold">支承板</text>
<text transform="translate(943.5 615.31) scale(0.34)" font-size="10" fill="#fff" stroke="#fff" stroke-width="0.44" text-anchor="middle" font-weight="bold">1</text>
<text transform="translate(960 615.31) scale(0.34)" font-size="10" fill="#fff" stroke="#fff" stroke-width="0.44" text-anchor="middle" font-weight="bold">45</text>
<text transform="translate(868 621.27) scale(0.34)" font-size="10" fill="#fff" stroke="#fff" stroke-width="0.44" text-anchor="middle" font-weight="bold" font-style="italic">8</text>
<text transform="translate(886.5 620.97) scale(0.28)" font-size="10" fill="#fff" stroke="#fff" stroke-width="0.54" text-anchor="middle" font-weight="bold">GB/T70.1</text>
<text transform="translate(918 621.27) scale(0.34)" font-size="10" fill="#fff" stroke="#fff" stroke-width="0.44" text-anchor="middle" font-weight="bold">长螺钉</text>
<text transform="translate(943.5 621.27) scale(0.34)" font-size="10" fill="#fff" stroke="#fff" stroke-width="0.44" text-anchor="middle" font-weight="bold">4</text>
<text transform="translate(960 621.27) scale(0.34)" font-size="10" fill="#fff" stroke="#fff" stroke-width="0.44" text-anchor="middle" font-weight="bold">35</text>
<text transform="translate(868 627.23) scale(0.34)" font-size="10" fill="#fff" stroke="#fff" stroke-width="0.44" text-anchor="middle" font-weight="bold" font-style="italic">7</text>
<text transform="translate(886.5 626.93) scale(0.28)" font-size="10" fill="#fff" stroke="#fff" stroke-width="0.54" text-anchor="middle" font-weight="bold">GB/T4169.8</text>
<text transform="translate(918 627.23) scale(0.34)" font-size="10" fill="#fff" stroke="#fff" stroke-width="0.44" text-anchor="middle" font-weight="bold">动模板</text>
<text transform="translate(943.5 627.23) scale(0.34)" font-size="10" fill="#fff" stroke="#fff" stroke-width="0.44" text-anchor="middle" font-weight="bold">1</text>
<text transform="translate(960 627.23) scale(0.34)" font-size="10" fill="#fff" stroke="#fff" stroke-width="0.44" text-anchor="middle" font-weight="bold">45</text>
<text transform="translate(1001 627.02) scale(0.3)" font-size="10" fill="#fff" stroke="#fff" stroke-width="0.5" text-anchor="middle" font-weight="bold">28-32HRC</text>
<text transform="translate(868 633.18) scale(0.34)" font-size="10" fill="#fff" stroke="#fff" stroke-width="0.44" text-anchor="middle" font-weight="bold" font-style="italic">6</text>
<text transform="translate(886.5 632.88) scale(0.28)" font-size="10" fill="#fff" stroke="#fff" stroke-width="0.54" text-anchor="middle" font-weight="bold">GB/T4169.3</text>
<text transform="translate(918 633.18) scale(0.34)" font-size="10" fill="#fff" stroke="#fff" stroke-width="0.44" text-anchor="middle" font-weight="bold">导套</text>
<text transform="translate(943.5 633.18) scale(0.34)" font-size="10" fill="#fff" stroke="#fff" stroke-width="0.44" text-anchor="middle" font-weight="bold">4</text>
<text transform="translate(960 633.18) scale(0.34)" font-size="10" fill="#fff" stroke="#fff" stroke-width="0.44" text-anchor="middle" font-weight="bold">T8A</text>
<text transform="translate(868 639.13) scale(0.34)" font-size="10" fill="#fff" stroke="#fff" stroke-width="0.44" text-anchor="middle" font-weight="bold" font-style="italic">5</text>
<text transform="translate(886.5 638.84) scale(0.28)" font-size="10" fill="#fff" stroke="#fff" stroke-width="0.54" text-anchor="middle" font-weight="bold">GB/T4169.4</text>
<text transform="translate(918 639.13) scale(0.34)" font-size="10" fill="#fff" stroke="#fff" stroke-width="0.44" text-anchor="middle" font-weight="bold">导柱</text>
<text transform="translate(943.5 639.13) scale(0.34)" font-size="10" fill="#fff" stroke="#fff" stroke-width="0.44" text-anchor="middle" font-weight="bold">4</text>
<text transform="translate(960 639.13) scale(0.34)" font-size="10" fill="#fff" stroke="#fff" stroke-width="0.44" text-anchor="middle" font-weight="bold">T8A</text>
<text transform="translate(868 645.09) scale(0.34)" font-size="10" fill="#fff" stroke="#fff" stroke-width="0.44" text-anchor="middle" font-weight="bold" font-style="italic">4</text>
<text transform="translate(886.5 644.79) scale(0.28)" font-size="10" fill="#fff" stroke="#fff" stroke-width="0.54" text-anchor="middle" font-weight="bold">GB/T4169.8</text>
<text transform="translate(918 645.09) scale(0.34)" font-size="10" fill="#fff" stroke="#fff" stroke-width="0.44" text-anchor="middle" font-weight="bold">推件板</text>
<text transform="translate(943.5 645.09) scale(0.34)" font-size="10" fill="#fff" stroke="#fff" stroke-width="0.44" text-anchor="middle" font-weight="bold">1</text>
<text transform="translate(960 645.09) scale(0.34)" font-size="10" fill="#fff" stroke="#fff" stroke-width="0.44" text-anchor="middle" font-weight="bold">45</text>
<text transform="translate(868 651.04) scale(0.34)" font-size="10" fill="#fff" stroke="#fff" stroke-width="0.44" text-anchor="middle" font-weight="bold" font-style="italic">3</text>
<text transform="translate(886.5 650.75) scale(0.28)" font-size="10" fill="#fff" stroke="#fff" stroke-width="0.54" text-anchor="middle" font-weight="bold">GB/T4169.8</text>
<text transform="translate(918 651.04) scale(0.34)" font-size="10" fill="#fff" stroke="#fff" stroke-width="0.44" text-anchor="middle" font-weight="bold">定模板</text>
<text transform="translate(943.5 651.04) scale(0.34)" font-size="10" fill="#fff" stroke="#fff" stroke-width="0.44" text-anchor="middle" font-weight="bold">1</text>
<text transform="translate(960 651.04) scale(0.34)" font-size="10" fill="#fff" stroke="#fff" stroke-width="0.44" text-anchor="middle" font-weight="bold">45</text>
<text transform="translate(1001 650.84) scale(0.3)" font-size="10" fill="#fff" stroke="#fff" stroke-width="0.5" text-anchor="middle" font-weight="bold">28-32HRC</text>
<text transform="translate(868 657) scale(0.34)" font-size="10" fill="#fff" stroke="#fff" stroke-width="0.44" text-anchor="middle" font-weight="bold" font-style="italic">2</text>
<text transform="translate(886.5 656.7) scale(0.28)" font-size="10" fill="#fff" stroke="#fff" stroke-width="0.54" text-anchor="middle" font-weight="bold">MJ-02</text>
<text transform="translate(918 657) scale(0.34)" font-size="10" fill="#fff" stroke="#fff" stroke-width="0.44" text-anchor="middle" font-weight="bold">型芯</text>
<text transform="translate(943.5 657) scale(0.34)" font-size="10" fill="#fff" stroke="#fff" stroke-width="0.44" text-anchor="middle" font-weight="bold">2</text>
<text transform="translate(960 657) scale(0.34)" font-size="10" fill="#fff" stroke="#fff" stroke-width="0.44" text-anchor="middle" font-weight="bold">Cr12</text>
<text transform="translate(868 662.96) scale(0.34)" font-size="10" fill="#fff" stroke="#fff" stroke-width="0.44" text-anchor="middle" font-weight="bold" font-style="italic">1</text>
<text transform="translate(886.5 662.66) scale(0.28)" font-size="10" fill="#fff" stroke="#fff" stroke-width="0.54" text-anchor="middle" font-weight="bold">GB/T4169.8</text>
<text transform="translate(918 662.96) scale(0.34)" font-size="10" fill="#fff" stroke="#fff" stroke-width="0.44" text-anchor="middle" font-weight="bold">型腔镶件</text>
<text transform="translate(943.5 662.96) scale(0.34)" font-size="10" fill="#fff" stroke="#fff" stroke-width="0.44" text-anchor="middle" font-weight="bold">2</text>
<text transform="translate(960 662.96) scale(0.34)" font-size="10" fill="#fff" stroke="#fff" stroke-width="0.44" text-anchor="middle" font-weight="bold">Cr12</text>
<text transform="translate(1001 662.75) scale(0.3)" font-size="10" fill="#fff" stroke="#fff" stroke-width="0.5" text-anchor="middle" font-weight="bold">58-62HRC</text>
<text transform="translate(868 672.5) scale(0.32)" font-size="10" fill="#fff" stroke="#fff" stroke-width="1.09" text-anchor="middle" font-weight="bold">序号</text>
<text transform="translate(886.5 672.5) scale(0.36)" font-size="10" fill="#fff" stroke="#fff" stroke-width="0.97" text-anchor="middle" font-weight="bold">代号</text>
<text transform="translate(918 672.5) scale(0.38)" font-size="10" fill="#fff" stroke="#fff" stroke-width="0.92" text-anchor="middle" font-weight="bold">名 称</text>
<text transform="translate(943.5 672.5) scale(0.32)" font-size="10" fill="#fff" stroke="#fff" stroke-width="1.09" text-anchor="middle" font-weight="bold">数量</text>
<text transform="translate(960 672.5) scale(0.38)" font-size="10" fill="#fff" stroke="#fff" stroke-width="0.92" text-anchor="middle" font-weight="bold">材 料</text>
<text transform="translate(975 668.6) scale(0.32)" font-size="10" fill="#fff" stroke="#fff" stroke-width="1.09" text-anchor="middle" font-weight="bold">单件</text>
<text transform="translate(983.5 668.6) scale(0.32)" font-size="10" fill="#fff" stroke="#fff" stroke-width="1.09" text-anchor="middle" font-weight="bold">总计</text>
<text transform="translate(979.5 675) scale(0.34)" font-size="10" fill="#fff" stroke="#fff" stroke-width="1.03" text-anchor="middle" font-weight="bold">重量</text>
<text transform="translate(1002 672.5) scale(0.38)" font-size="10" fill="#fff" stroke="#fff" stroke-width="0.92" text-anchor="middle" font-weight="bold">备注</text>
<path d="M862.5 676V725" stroke="#fff"/>
<path d="M862 724.5H1023" stroke="#fff"/>
<path d="M862 682.5H930" stroke="#fff"/>
<path d="M862 688.5H930" stroke="#fff"/>
<path d="M862 694.5H930" stroke="#fff"/>
<path d="M862 700.5H930" stroke="#fff"/>
<path d="M870.5 677V700" stroke="#fff"/>
<path d="M879.5 677V700" stroke="#fff"/>
<path d="M893.5 677V700" stroke="#fff"/>
<path d="M906.5 677V700" stroke="#fff"/>
<path d="M916.5 677V700" stroke="#fff"/>
<path d="M862 706.5H930" stroke="#fff"/>
<path d="M862 712.5H930" stroke="#fff"/>
<path d="M862 718.5H930" stroke="#fff"/>
<path d="M872.5 700V724" stroke="#fff"/>
<path d="M882.5 700V724" stroke="#fff"/>
<path d="M896.5 700V724" stroke="#fff"/>
<path d="M906.5 700V724" stroke="#fff"/>
<path d="M916.5 700V724" stroke="#fff"/>
<path d="M930.5 676V724" stroke="#fff"/>
<text transform="translate(866.8 698.8) scale(0.32)" font-size="10" fill="#fff" stroke="#fff" stroke-width="1.09" text-anchor="middle" font-weight="bold">标记</text>
<text transform="translate(875.3 698.8) scale(0.32)" font-size="10" fill="#fff" stroke="#fff" stroke-width="1.09" text-anchor="middle" font-weight="bold">处数</text>
<text transform="translate(886.7 698.8) scale(0.32)" font-size="10" fill="#fff" stroke="#fff" stroke-width="1.09" text-anchor="middle" font-weight="bold">分区</text>
<text transform="translate(900.2 698.8) scale(0.32)" font-size="10" fill="#fff" stroke="#fff" stroke-width="1.09" text-anchor="middle" font-weight="bold">更改文件</text>
<text transform="translate(911.7 698.8) scale(0.32)" font-size="10" fill="#fff" stroke="#fff" stroke-width="1.09" text-anchor="middle" font-weight="bold">签名</text>
<text transform="translate(923.4 698.8) scale(0.32)" font-size="10" fill="#fff" stroke="#fff" stroke-width="1.09" text-anchor="middle" font-weight="bold">日期</text>
<text transform="translate(867.5 704.8) scale(0.34)" font-size="10" fill="#fff" stroke="#fff" stroke-width="1.03" text-anchor="middle" font-weight="bold">设计</text>
<text transform="translate(901.5 704.8) scale(0.34)" font-size="10" fill="#fff" stroke="#fff" stroke-width="1.03" text-anchor="middle" font-weight="bold">标准</text>
<text transform="translate(867.5 716.9) scale(0.34)" font-size="10" fill="#fff" stroke="#fff" stroke-width="1.03" text-anchor="middle" font-weight="bold">审核</text>
<text transform="translate(867.5 723) scale(0.34)" font-size="10" fill="#fff" stroke="#fff" stroke-width="1.03" text-anchor="middle" font-weight="bold">工艺</text>
<text transform="translate(901.5 723) scale(0.34)" font-size="10" fill="#fff" stroke="#fff" stroke-width="1.03" text-anchor="middle" font-weight="bold">批准</text>
<path d="M972.5 676V724" stroke="#fff"/>
<path d="M930 700.5H972" stroke="#fff"/>
<path d="M930 707.5H972" stroke="#fff"/>
<path d="M930 716.5H972" stroke="#fff"/>
<path d="M951.5 700V716" stroke="#fff"/>
<path d="M962.5 700V716" stroke="#fff"/>
<path d="M936.5 707.5V716" stroke="#fff"/>
<path d="M941.5 707.5V716" stroke="#fff"/>
<path d="M946.5 707.5V716" stroke="#fff"/>
<text transform="translate(951 690.5) scale(0.5)" font-size="10" fill="#fff" stroke="#fff" stroke-width="0.7" text-anchor="middle" font-weight="bold" font-style="italic">装配图</text>
<text transform="translate(941 706) scale(0.34)" font-size="10" fill="#fff" stroke="#fff" stroke-width="1.03" text-anchor="middle" font-weight="bold">阶段标记</text>
<text transform="translate(957 706) scale(0.34)" font-size="10" fill="#fff" stroke="#fff" stroke-width="1.03" text-anchor="middle" font-weight="bold">重量</text>
<text transform="translate(967.5 706) scale(0.34)" font-size="10" fill="#fff" stroke="#fff" stroke-width="1.03" text-anchor="middle" font-weight="bold">比例</text>
<text transform="translate(967.5 714.5) scale(0.34)" font-size="10" fill="#fff" stroke="#fff" stroke-width="1.03" text-anchor="middle" font-weight="bold">1:1</text>
<text transform="translate(951 722.5) scale(0.4)" font-size="10" fill="#fff" stroke="#fff" stroke-width="0.87" text-anchor="middle" font-weight="bold">共1张  第1张</text>
<path d="M972 690.5H1023" stroke="#fff"/>
<path d="M972 708.5H1023" stroke="#fff"/>
<text transform="translate(982.5 686) scale(0.46)" font-size="10" fill="#fff" stroke="#fff" stroke-width="0.76" text-anchor="middle" font-weight="bold" font-style="italic">塑</text>
<text transform="translate(997.5 686) scale(0.46)" font-size="10" fill="#fff" stroke="#fff" stroke-width="0.76" text-anchor="middle" font-weight="bold" font-style="italic">料</text>
<text transform="translate(986 700.5) scale(0.42)" font-size="10" fill="#fff" stroke="#fff" stroke-width="0.83" text-anchor="middle" font-weight="bold">注射模具</text>
<text transform="translate(985.5 719) scale(0.38)" font-size="10" fill="#fff" stroke="#fff" stroke-width="0.92" text-anchor="middle" font-weight="bold">模具装配图</text>
</svg>
<div id="tb">
 <div class="cb" style="left:0;width:62px"><span style="left:-4px">0</span><div class="ar" style="left:51px"></div></div>
 <div class="gr" style="left:65px"></div><div class="gr l" style="left:66px"></div>
 <div id="ico"><i style="left:1px;top:3px;width:3px"></i><i style="left:5px;top:3px;width:2px"></i><i style="left:8px;top:3px;width:3px"></i><i style="left:1px;top:5px;width:10px"></i></div>
 <div class="cb" style="left:94px;width:98px"><span style="left:4px">Standard</span><div class="ar" style="left:86px"></div></div>
 <div class="gr" style="left:197px"></div><div class="gr l" style="left:199px"></div><div class="gr" style="left:203px"></div><div class="gr l" style="left:205px"></div><div class="gr" style="left:207px"></div>
 <div class="cb" style="left:212px;width:146px"><div class="chk" style="left:5px"></div><span style="left:19px">ByLayer</span><div class="ar" style="left:136px"></div></div>
 <div class="gr" style="left:361px"></div><div class="gr l" style="left:363px"></div>
 <div class="cb" style="left:369px;width:156px"><div class="sw" style="left:3px;width:59px"></div><span style="left:68px">ByLayer</span><div class="ar" style="left:146px"></div></div>
 <div class="gr" style="left:528px"></div><div class="gr l" style="left:530px"></div>
 <div class="cb" style="left:534px;width:124px"><div class="sw" style="left:4px;width:35px"></div><span style="left:43px;letter-spacing:1.1px">0.25 毫米</span><div class="ar" style="left:111px"></div></div>
 <div class="gr" style="left:661px"></div><div class="gr l" style="left:663px"></div>
 <div class="cb dis" style="left:665px;width:119px"><span style="left:7px">随颜色</span><div style="position:absolute;left:99px;top:0;width:18px;height:11px;background:#fff"></div><div class="ar g" style="left:106px"></div></div>
 <div class="gr l" style="left:786px"></div>
</div>
<div id="sb"><div class="tab"></div><svg width="30" height="11" style="position:absolute;left:0;top:0"><path d="M26.5 0L21.5 11" stroke="#222" stroke-width="1.4"/><path d="M0.5 0V11" stroke="#000" stroke-width="1"/></svg><span style="left:1px;top:0px">局2</span></div>
</body>
</html>
